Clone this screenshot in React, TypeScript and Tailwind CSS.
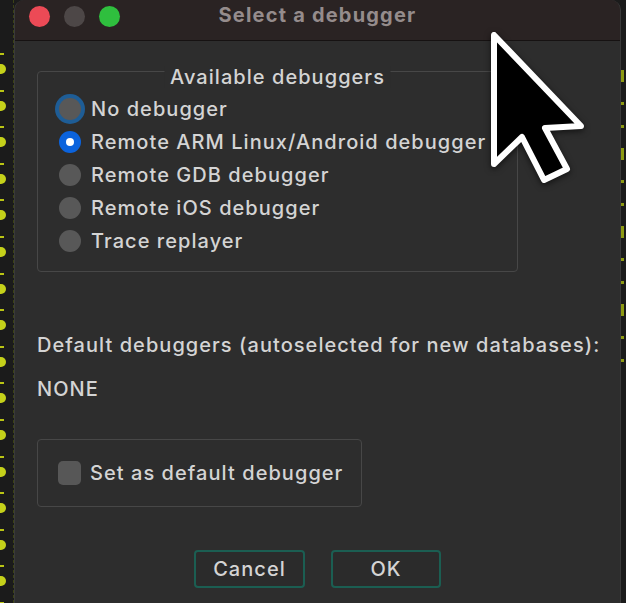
import React from "react";

const font = "font-['Inter','Liberation_Sans',sans-serif]";

function Radio({ state }: { state: "off" | "on" | "focus" }) {
  if (state === "on") {
    return (
      <span className="w-[22px] h-[22px] rounded-full bg-[#0b63dd] flex items-center justify-center shrink-0">
        <span className="w-[8px] h-[8px] rounded-full bg-white" />
      </span>
    );
  }
  return (
    <span
      className={
        "w-[22px] h-[22px] rounded-full bg-[#585858] shrink-0 " +
        (state === "focus" ? "ring-4 ring-[#1e5d96]" : "")
      }
    />
  );
}

function Cursor() {
  return (
    <svg
      className="absolute left-[468px] top-[12px] drop-shadow-[0_2px_3px_rgba(0,0,0,0.6)]"
      width="135"
      height="190"
      viewBox="0 0 135 190"
    >
      <path
        d="M26 23 L26 152 L54 125 L76 168 L99 157 L77 116 L113 114 Z"
        fill="#000"
        stroke="#fff"
        strokeWidth="6"
        strokeLinejoin="round"
      />
    </svg>
  );
}

export default function App() {
  const dots = Array.from({ length: 16 }, (_, i) => i);
  const rows: { label: string; state: "off" | "on" | "focus" }[] = [
    { label: "No debugger", state: "focus" },
    { label: "Remote ARM Linux/Android debugger", state: "on" },
    { label: "Remote GDB debugger", state: "off" },
    { label: "Remote iOS debugger", state: "off" },
    { label: "Trace replayer", state: "off" },
  ];
  return (
    <div className={"relative w-[626px] h-[603px] flex bg-[#1b1b1b] overflow-hidden " + font}>
      {/* left gutter */}
      <div className="w-[14px] shrink-0 flex flex-col pt-[53px] border-r border-dashed border-[#3c4216]">
        {dots.map((i) => (
          <div key={i} className="h-[36.6px] shrink-0 flex flex-col">
            <span className="w-[4px] h-[2px] bg-[#b9c414]" />
            <span className="mt-[9px] -ml-[4px] w-[10px] h-[10px] rounded-full bg-[#c5d11a]" />
          </div>
        ))}
      </div>

      {/* window */}
      <div className="w-[607px] shrink-0 flex flex-col bg-[#2d2d2d] rounded-t-[10px] overflow-hidden border-x border-[#3a3a3a]">
        <div className="h-[41px] shrink-0 grid grid-cols-[1fr_auto_1fr] items-center bg-[#2a2323] border-b border-[#161212]">
          <div className="flex items-center gap-[14px] pl-[14px] -mt-[8px]">
            <span className="w-[21px] h-[21px] rounded-full bg-[#ec4a56]" />
            <span className="w-[21px] h-[21px] rounded-full bg-[#4d4747]" />
            <span className="w-[21px] h-[21px] rounded-full bg-[#2fbf3e]" />
          </div>
          <div className="text-[20px] font-bold tracking-[1.2px] text-[#958c8c] leading-none -mt-[10px]">
            Select a debugger
          </div>
          <div />
        </div>

        <div className="flex flex-col pl-[22px] text-[#d4d4d4] text-[20px] font-medium tracking-[1.05px] leading-[22px]">
          <div className="relative mt-[30px] w-[481px] h-[201px] border border-[#474747] rounded-[4px] pt-[20px]">
            <span className="absolute top-[-6px] left-1/2 -translate-x-1/2 px-[6px] bg-[#2d2d2d] whitespace-nowrap">
              Available debuggers
            </span>
            {rows.map((r) => (
              <div key={r.label} className="h-[33px] flex items-center gap-[10px] pl-[21px] whitespace-nowrap">
                <Radio state={r.state} />
                <span>{r.label}</span>
              </div>
            ))}
          </div>

          <div className="mt-[62px] whitespace-nowrap">Default debuggers (autoselected for new databases):</div>
          <div className="mt-[22px]">NONE</div>

          <div className="mt-[39px] w-[325px] h-[68px] border border-[#474747] rounded-[4px] flex items-center gap-[9px] pl-[20px]">
            <span className="w-[23px] h-[24px] rounded-[5px] bg-[#575757]" />
            <span className="whitespace-nowrap">Set as default debugger</span>
          </div>

          <div className="mt-[43px] -ml-[22px] flex justify-center gap-[26px]">
            <button className="w-[111px] h-[38px] rounded-[4px] border-2 border-[#1b5e52] bg-[#2b2b2b] text-[#d4d4d4] text-[20px] font-medium tracking-[1.05px]">
              Cancel
            </button>
            <button className="w-[110px] h-[38px] rounded-[4px] border-2 border-[#1b5e52] bg-[#2b2b2b] text-[#d4d4d4] text-[20px] font-medium tracking-[1.05px]">
              OK
            </button>
          </div>
        </div>
      </div>

      {/* right gutter */}
      <div className="flex-1 flex flex-col gap-[20px] pt-[70px]">
        {Array.from({ length: 12 }, (_, i) => (
          <span key={i} className={"w-[3px] bg-[#8d9a12] " + (i % 3 === 0 ? "h-[12px]" : "h-[3px]")} />
        ))}
      </div>

      <Cursor />
    </div>
  );
}
